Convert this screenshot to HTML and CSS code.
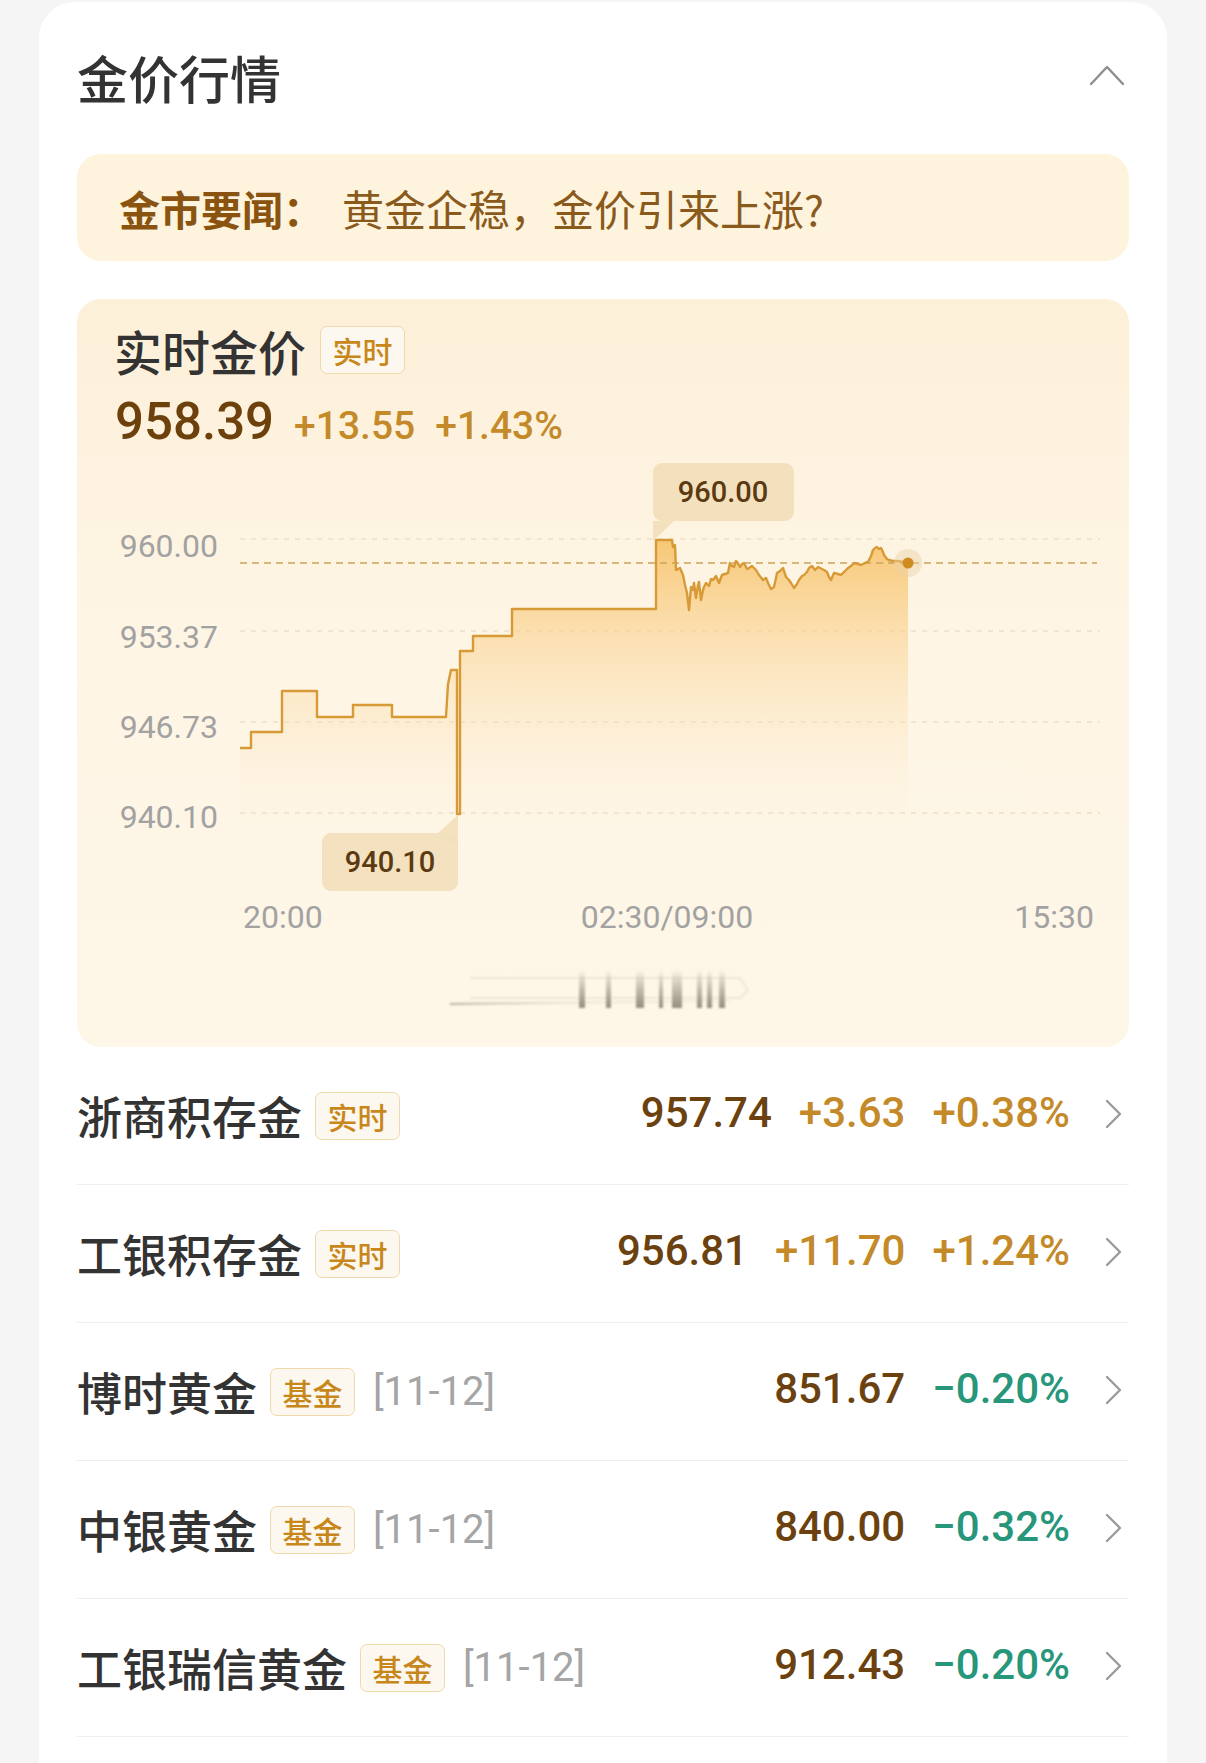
FILE: index.html
```html
<!DOCTYPE html>
<html lang="zh-CN">
<head>
<meta charset="utf-8">
<title>金价行情</title>
<link rel="stylesheet" href="styles.css">
</head>
<body>
<div class="card">
  <div class="header">
    <h1 class="title">金价行情</h1>
    <svg class="collapse" width="36" height="22" viewBox="0 0 36 22"><polyline points="2,20 18,3 34,20" fill="none" stroke="#8e8e8e" stroke-width="2.4" stroke-linecap="round" stroke-linejoin="round"/></svg>
  </div>

  <div class="news"><span class="news-label">金市要闻：</span><span class="news-text">黄金企稳，金价引来上涨?</span></div>

  <div class="quote">
    <div class="quote-head"><span class="quote-title">实时金价</span><span class="tag">实时</span></div>
    <div class="quote-price"><span class="price-main">958.39</span><span class="price-chg">+13.55</span><span class="price-chg">+1.43%</span></div>
    <svg class="chart" width="1052" height="595" viewBox="77 452 1052 595">
      <defs>
        <linearGradient id="fillGrad" gradientUnits="userSpaceOnUse" x1="0" y1="540" x2="0" y2="835">
          <stop offset="0" stop-color="#f6bf62" stop-opacity="0.85"/>
          <stop offset="0.3" stop-color="#f9cf88" stop-opacity="0.6"/>
          <stop offset="0.65" stop-color="#fbe2b6" stop-opacity="0.35"/>
          <stop offset="1" stop-color="#fdf2de" stop-opacity="0"/>
        </linearGradient>
        <linearGradient id="barGrad" x1="0" y1="0" x2="0" y2="1">
          <stop offset="0" stop-color="#8a8378" stop-opacity="0"/>
          <stop offset="0.5" stop-color="#8a8378" stop-opacity="0.5"/>
          <stop offset="1" stop-color="#7a7468" stop-opacity="0.8"/>
        </linearGradient>
        <linearGradient id="lineGrad" x1="0" y1="0" x2="1" y2="0">
          <stop offset="0" stop-color="#8a8378" stop-opacity="0.6"/>
          <stop offset="0.4" stop-color="#b0a898" stop-opacity="0.25"/>
          <stop offset="1" stop-color="#b0a898" stop-opacity="0.1"/>
        </linearGradient>
        <filter id="soft" x="-10%" y="-50%" width="120%" height="200%"><feGaussianBlur stdDeviation="1.2"/></filter>
      </defs>

      <!-- grid -->
      <g stroke="#ecdfc6" stroke-width="1.5" stroke-dasharray="5 6">
        <line x1="240" y1="539" x2="1100" y2="539"/>
        <line x1="240" y1="631" x2="1100" y2="631"/>
        <line x1="240" y1="722" x2="1100" y2="722"/>
        <line x1="240" y1="813" x2="1100" y2="813"/>
      </g>

      <!-- y axis -->
      <g class="axis" text-anchor="end">
        <text x="218" y="557">960.00</text>
        <text x="218" y="648">953.37</text>
        <text x="218" y="738">946.73</text>
        <text x="218" y="828">940.10</text>
      </g>

      <!-- area + line -->
      <path fill="url(#fillGrad)" d="M240,748 H251 V732 H282 V691 H317 V717 H353 V705 H392 V717 H446 L448,684 L451,670 H457 V814 H460 V651 H473 V636 H512 V609 H656 V540 H672 L673,547 L675,545 L676,570 L680,568 L683,575 L685,585 L687,593 L689,610 L691,587 L693,590 L694,583 L696,598 L698,585 L699,582 L701,600 L703,590 L704,587 L706,583 L709,586 L711,579 L713,580 L716,576 L719,583 L722,575 L725,574 L728,573 L730,563 L732,566 L734,567 L736,561 L737,562 L740,567 L742,564 L744,563 L747,569 L749,568 L752,566 L756,570 L759,575 L763,580 L766,578 L768,583 L771,589 L774,587 L776,578 L777,573 L780,571 L783,568 L786,577 L789,580 L791,583 L794,588 L797,584 L799,580 L802,576 L804,575 L807,572 L809,568 L812,566 L815,570 L818,567 L820,568 L824,570 L827,572 L829,577 L831,580 L834,573 L838,574 L841,575 L844,572 L848,568 L851,566 L854,563 L858,564 L861,565 L865,563 L868,562 L871,556 L873,550 L875,548 L877,547 L879,549 L881,548 L883,552 L884,555 L887,559 L889,560 L893,561 L898,561 L903,562 L908,563 V840 H240 Z"/>

      <line x1="240" y1="563" x2="1097" y2="563" stroke="#cda35a" stroke-width="1.6" stroke-dasharray="7 5"/>

      <path fill="none" stroke="#d79a36" stroke-width="2.4" stroke-linejoin="round" d="M240,748 H251 V732 H282 V691 H317 V717 H353 V705 H392 V717 H446 L448,684 L451,670 H457 V814 H460 V651 H473 V636 H512 V609 H656 V540 H672 L673,547 L675,545 L676,570 L680,568 L683,575 L685,585 L687,593 L689,610 L691,587 L693,590 L694,583 L696,598 L698,585 L699,582 L701,600 L703,590 L704,587 L706,583 L709,586 L711,579 L713,580 L716,576 L719,583 L722,575 L725,574 L728,573 L730,563 L732,566 L734,567 L736,561 L737,562 L740,567 L742,564 L744,563 L747,569 L749,568 L752,566 L756,570 L759,575 L763,580 L766,578 L768,583 L771,589 L774,587 L776,578 L777,573 L780,571 L783,568 L786,577 L789,580 L791,583 L794,588 L797,584 L799,580 L802,576 L804,575 L807,572 L809,568 L812,566 L815,570 L818,567 L820,568 L824,570 L827,572 L829,577 L831,580 L834,573 L838,574 L841,575 L844,572 L848,568 L851,566 L854,563 L858,564 L861,565 L865,563 L868,562 L871,556 L873,550 L875,548 L877,547 L879,549 L881,548 L883,552 L884,555 L887,559 L889,560 L893,561 L898,561 L903,562 L908,563"/>

      <circle cx="908" cy="563" r="14" fill="#ead2a6" fill-opacity="0.45"/>
      <circle cx="908" cy="563" r="5.5" fill="#cf8b22"/>

      <!-- max tooltip -->
      <rect x="653" y="463" width="141" height="58" rx="9" fill="#f2dfba" fill-opacity="0.9"/>
      <path d="M653,512 V541 L674,521 H653 Z" fill="#f2dfba" fill-opacity="0.9"/>
      <text class="tip" x="723" y="502" text-anchor="middle">960.00</text>

      <!-- min tooltip -->
      <rect x="322" y="833" width="136" height="58" rx="9" fill="#f2dfba" fill-opacity="0.9"/>
      <path d="M438,833 L458,815 V845 Z" fill="#f2dfba" fill-opacity="0.9"/>
      <text class="tip" x="390" y="872" text-anchor="middle">940.10</text>

      <!-- x axis -->
      <g class="axis">
        <text x="243" y="928">20:00</text>
        <text x="667" y="928" text-anchor="middle">02:30/09:00</text>
        <text x="1094" y="928" text-anchor="end">15:30</text>
      </g>

      <!-- scroll hint -->
      <g filter="url(#soft)">
        <path d="M470,978 H740 L748,990 L740,998 H470" fill="none" stroke="#c9c1b2" stroke-opacity="0.3" stroke-width="2"/>
        <line x1="450" y1="1004" x2="730" y2="1001" stroke="url(#lineGrad)" stroke-width="2"/>
        <rect x="579" y="970" width="6" height="38" fill="url(#barGrad)"/>
        <rect x="606" y="970" width="5" height="38" fill="url(#barGrad)"/>
        <rect x="636" y="970" width="8" height="38" fill="url(#barGrad)"/>
        <rect x="659" y="970" width="4" height="38" fill="url(#barGrad)"/>
        <rect x="672" y="970" width="10" height="38" fill="url(#barGrad)"/>
        <rect x="697" y="970" width="5" height="38" fill="url(#barGrad)"/>
        <rect x="707" y="970" width="5" height="38" fill="url(#barGrad)"/>
        <rect x="719" y="970" width="6" height="38" fill="url(#barGrad)"/>
      </g>
    </svg>
  </div>

  <ul class="list">
    <li class="row">
      <div class="row-left"><span class="row-name">浙商积存金</span><span class="tag">实时</span></div>
      <div class="row-right"><span class="row-price">957.74</span><span class="up">+3.63</span><span class="up">+0.38%</span><svg class="go" width="19" height="30" viewBox="0 0 19 30"><polyline points="3,2 16,15 3,28" fill="none" stroke="#9b9b9b" stroke-width="2.4" stroke-linecap="round" stroke-linejoin="round"/></svg></div>
    </li>
    <li class="row">
      <div class="row-left"><span class="row-name">工银积存金</span><span class="tag">实时</span></div>
      <div class="row-right"><span class="row-price">956.81</span><span class="up">+11.70</span><span class="up">+1.24%</span><svg class="go" width="19" height="30" viewBox="0 0 19 30"><polyline points="3,2 16,15 3,28" fill="none" stroke="#9b9b9b" stroke-width="2.4" stroke-linecap="round" stroke-linejoin="round"/></svg></div>
    </li>
    <li class="row">
      <div class="row-left"><span class="row-name">博时黄金</span><span class="tag">基金</span><span class="date">[11-12]</span></div>
      <div class="row-right"><span class="row-price">851.67</span><span class="down">−0.20%</span><svg class="go" width="19" height="30" viewBox="0 0 19 30"><polyline points="3,2 16,15 3,28" fill="none" stroke="#9b9b9b" stroke-width="2.4" stroke-linecap="round" stroke-linejoin="round"/></svg></div>
    </li>
    <li class="row">
      <div class="row-left"><span class="row-name">中银黄金</span><span class="tag">基金</span><span class="date">[11-12]</span></div>
      <div class="row-right"><span class="row-price">840.00</span><span class="down">−0.32%</span><svg class="go" width="19" height="30" viewBox="0 0 19 30"><polyline points="3,2 16,15 3,28" fill="none" stroke="#9b9b9b" stroke-width="2.4" stroke-linecap="round" stroke-linejoin="round"/></svg></div>
    </li>
    <li class="row">
      <div class="row-left"><span class="row-name">工银瑞信黄金</span><span class="tag">基金</span><span class="date">[11-12]</span></div>
      <div class="row-right"><span class="row-price">912.43</span><span class="down">−0.20%</span><svg class="go" width="19" height="30" viewBox="0 0 19 30"><polyline points="3,2 16,15 3,28" fill="none" stroke="#9b9b9b" stroke-width="2.4" stroke-linecap="round" stroke-linejoin="round"/></svg></div>
    </li>
  </ul>
</div>
</body>
</html>
```

FILE: styles.css
```css
* { box-sizing: border-box; }

html, body {
  margin: 0;
  padding: 0;
  background: #f5f5f5;
}

body {
  font-family: "Noto Sans CJK SC", "Noto Sans", sans-serif;
  color: #333333;
  overflow: hidden;
}

.card {
  margin: 2px 0 0 39px;
  width: 1128px;
  background: #ffffff;
  border-radius: 36px;
  padding: 45px 38px 80px;
}

.header {
  height: 60px;
  display: flex;
  align-items: center;
  justify-content: space-between;
}

.title {
  margin: 0;
  font-size: 51px;
  line-height: 60px;
  font-weight: 500;
  color: #333333;
}

.collapse {
  margin-right: 4px;
  margin-top: -4px;
}

.news {
  margin-top: 47px;
  height: 107px;
  border-radius: 24px;
  background: #fef4dd;
  display: flex;
  align-items: center;
  padding-left: 42px;
  line-height: 50px;
}

.news-label {
  font-size: 41px;
  font-weight: 700;
  color: #8a5410;
}

.news-text {
  margin-left: 18px;
  font-size: 42px;
  color: #8a5a1d;
}

.quote {
  margin-top: 38px;
  border-radius: 24px;
  background: linear-gradient(180deg, #fdf0d9 0%, #fef5e5 45%, #fef6e7 100%);
  padding-top: 23px;
  overflow: hidden;
}

.quote-head {
  height: 56px;
  display: flex;
  align-items: center;
  gap: 14px;
  padding-left: 37px;
}

.quote-title {
  font-size: 48px;
  line-height: 56px;
  font-weight: 500;
  color: #333333;
}

.tag {
  width: 85px;
  height: 48px;
  display: inline-flex;
  align-items: center;
  justify-content: center;
  border: 1px solid #efd9ad;
  border-radius: 7px;
  background: #fdf8ef;
  color: #c8871b;
  font-size: 30px;
  line-height: 46px;
  font-weight: 500;
}

.quote-price {
  margin-top: 14px;
  height: 60px;
  display: flex;
  align-items: baseline;
  padding-left: 38px;
  font-family: Roboto, "Noto Sans CJK SC", sans-serif;
}

.price-main {
  font-size: 51px;
  line-height: 60px;
  font-weight: 500;
  color: #6d410b;
  margin-right: 20px;
}

.price-chg {
  font-size: 39px;
  line-height: 60px;
  font-weight: 500;
  color: #c48a2a;
  margin-right: 20px;
}

.chart {
  display: block;
}

.axis {
  font-family: Roboto, sans-serif;
  font-size: 32px;
  fill: #a2a2a2;
}

.tip {
  font-family: Roboto, sans-serif;
  font-size: 29px;
  font-weight: 500;
  fill: #5b3a12;
}

.list {
  list-style: none;
  margin: 0;
  padding: 0;
}

.row {
  height: 138px;
  border-bottom: 1px solid #efefef;
  display: flex;
  align-items: center;
  justify-content: space-between;
}

.row-left {
  display: flex;
  align-items: center;
  gap: 13px;
}

.row-name {
  font-size: 45px;
  line-height: 54px;
  font-weight: 500;
  color: #333333;
}

.date {
  margin-left: 5px;
  font-family: Roboto, sans-serif;
  font-size: 40px;
  line-height: 54px;
  color: #a5a5a5;
}

.row-right {
  display: flex;
  align-items: center;
  gap: 27px;
  font-family: Roboto, sans-serif;
  font-size: 42px;
  line-height: 54px;
  font-weight: 500;
  margin-top: -6px;
  margin-right: 5px;
}

.row-price {
  color: #6b420f;
  font-size: 42px;
}

.up {
  color: #c48a2a;
}

.down {
  color: #27967a;
}

.go {
  margin-left: 7px;
  margin-right: 1px;
  margin-top: 2px;
}
```
